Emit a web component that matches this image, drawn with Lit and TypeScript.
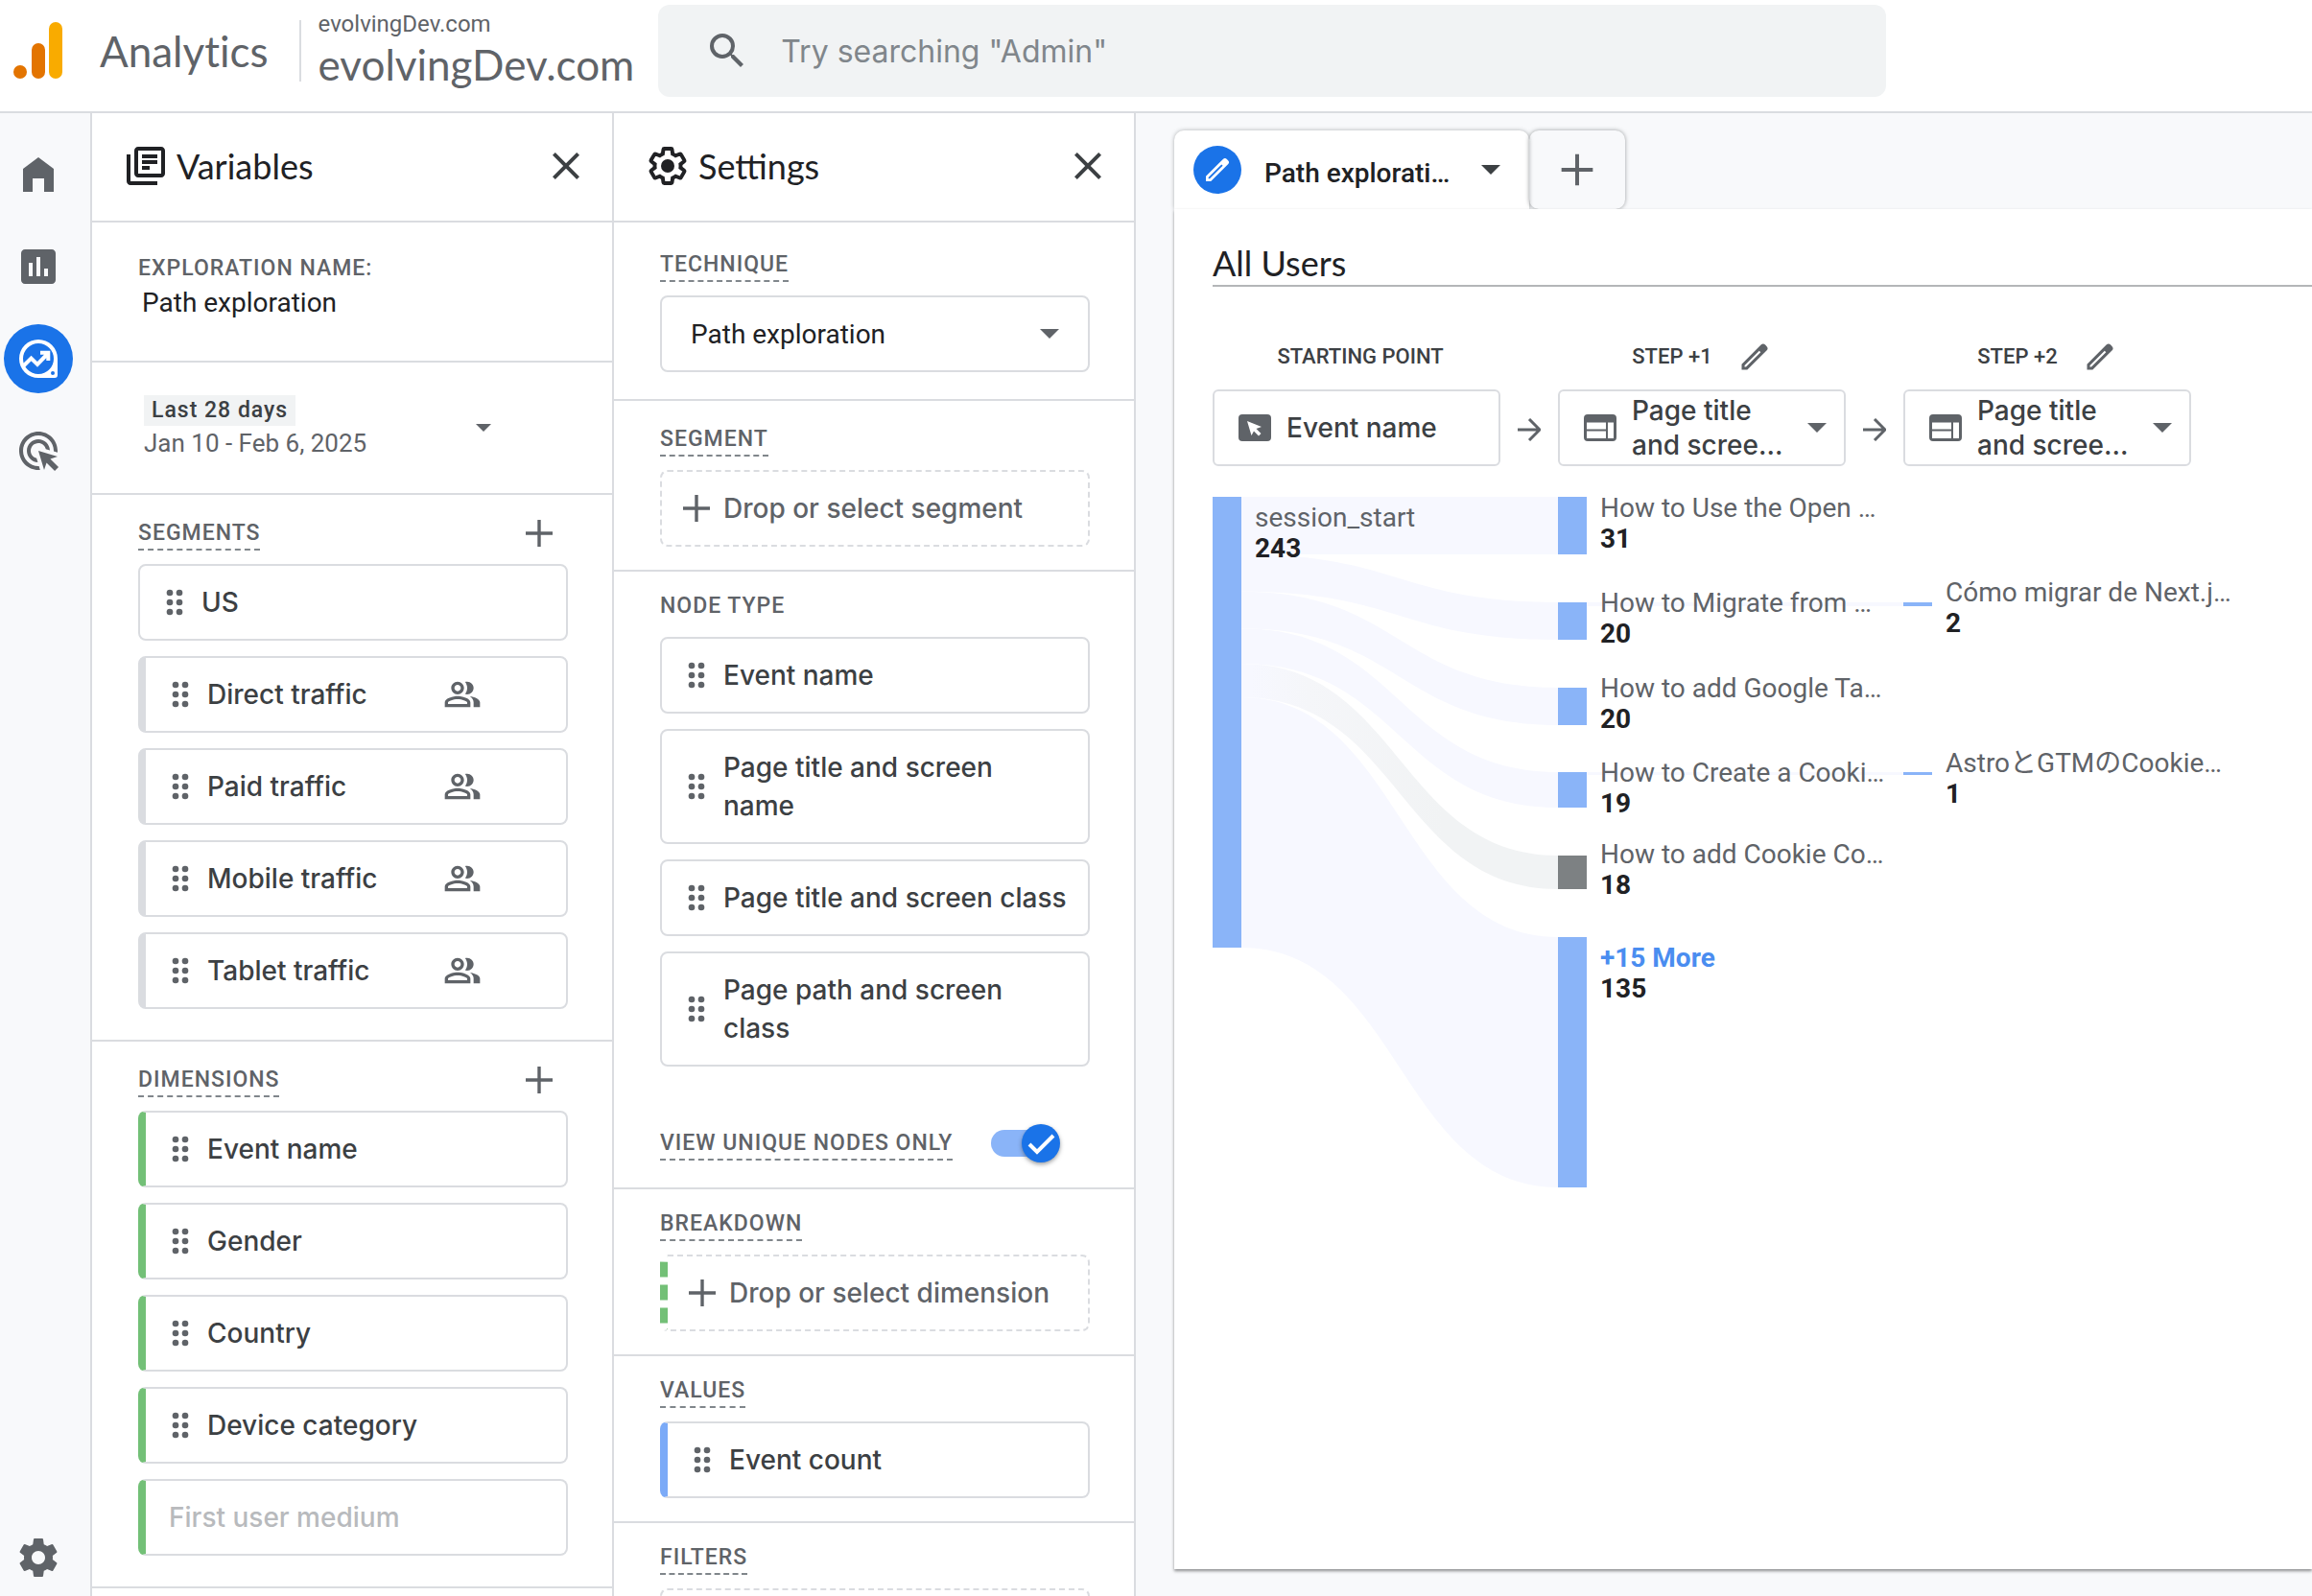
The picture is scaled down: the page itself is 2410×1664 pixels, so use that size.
import { LitElement, html, svg, css, nothing } from "lit";
import { customElement, property, state } from "lit/decorators.js";
import { classMap } from "lit/directives/class-map.js";
import { styleMap } from "lit/directives/style-map.js";

/* ---------- icons ---------- */

const GEAR =
  "M19.43 12.98c.04-.32.07-.64.07-.98s-.03-.66-.07-.98l2.11-1.65c.19-.15.24-.42.12-.64l-2-3.46c-.12-.22-.39-.3-.61-.22l-2.49 1c-.52-.4-1.08-.73-1.69-.98l-.38-2.65C14.46 2.18 14.25 2 14 2h-4c-.25 0-.46.18-.49.42l-.38 2.65c-.61.25-1.17.59-1.69.98l-2.49-1c-.23-.09-.49 0-.61.22l-2 3.46c-.13.22-.07.49.12.64l2.11 1.65c-.04.32-.07.65-.07.98s.03.66.07.98l-2.11 1.65c-.19.15-.24.42-.12.64l2 3.46c.12.22.39.3.61.22l2.49-1c.52.4 1.08.73 1.69.98l.38 2.65c.03.24.24.42.49.42h4c.25 0 .46-.18.49-.42l.38-2.65c.61-.25 1.17-.59 1.69-.98l2.49 1c.23.09.49 0 .61-.22l2-3.46c.12-.22.07-.49-.12-.64l-2.11-1.65z";

const PATHS: Record<string, string> = {
  home: "M4 21V9l8-6 8 6v12h-5v-7H9v7z",
  reports:
    "M19 3H5c-1.1 0-2 .9-2 2v14c0 1.1.9 2 2 2h14c1.1 0 2-.9 2-2V5c0-1.1-.9-2-2-2zM9 17H7v-7h2v7zm4 0h-2V7h2v10zm4 0h-2v-4h2v4z",
  ads: "M11.71 17.99C8.53 17.84 6 15.22 6 12c0-3.31 2.69-6 6-6 3.22 0 5.84 2.53 5.99 5.71l-2.1-.63C15.48 9.31 13.89 8 12 8c-2.21 0-4 1.79-4 4 0 1.89 1.31 3.48 3.08 3.89l.63 2.1zM22 12c0 .3-.01.6-.04.9l-1.97-.59c.01-.1.01-.21.01-.31 0-4.42-3.58-8-8-8s-8 3.58-8 8 3.58 8 8 8c.1 0 .21 0 .31-.01l.59 1.97c-.3.03-.6.04-.9.04C6.48 22 2 17.52 2 12S6.48 2 12 2s10 4.48 10 10zm-3.77 4.26L22 15l-10-3 3 10 1.26-3.77 4.27 4.27 1.98-1.98-4.28-4.26z",
  gear: GEAR + "M12 15.5c-1.93 0-3.5-1.57-3.5-3.5s1.57-3.5 3.5-3.5 3.5 1.57 3.5 3.5-1.57 3.5-3.5 3.5z",
  close:
    "M19 6.41 17.59 5 12 10.59 6.41 5 5 6.41 10.59 12 5 17.59 6.41 19 12 13.41 17.59 19 19 17.59 13.41 12z",
  add: "M12.85 5v6.15H19v1.7h-6.15V19h-1.7v-6.15H5v-1.7h6.15V5z",
  search:
    "M15.5 14h-.79l-.28-.27A6.47 6.47 0 0 0 16 9.5 6.5 6.5 0 1 0 9.5 16c1.61 0 3.09-.59 4.23-1.57l.27.28v.79l5 4.99L20.49 19l-4.99-5zm-6 0a4.5 4.5 0 1 1 0-9 4.5 4.5 0 0 1 0 9z",
  people:
    "M16.67 13.13C18.04 14.06 19 15.32 19 17v3h4v-3c0-2.18-3.57-3.47-6.33-3.87zM15 12c2.21 0 4-1.79 4-4s-1.79-4-4-4c-.47 0-.91.1-1.33.24C14.5 5.27 15 6.58 15 8s-.5 2.73-1.33 3.76c.42.14.86.24 1.33.24zM9 12c2.21 0 4-1.79 4-4s-1.79-4-4-4-4 1.79-4 4 1.79 4 4 4zm0-6c1.1 0 2 .9 2 2s-.9 2-2 2-2-.9-2-2 .9-2 2-2zM9 13c-2.67 0-8 1.34-8 4v3h16v-3c0-2.66-5.33-4-8-4zm6 5H3v-.99C3.2 16.29 6.3 15 9 15s5.8 1.29 6 2v1z",
  library:
    "M20 2H8c-1.1 0-2 .9-2 2v12c0 1.1.9 2 2 2h12c1.1 0 2-.9 2-2V4c0-1.1-.9-2-2-2zm0 14H8V4h12v12zM10 6h8v2h-8zM10 9h8v2h-8zM10 12h4v2h-4zM4 6H2v14c0 1.1.9 2 2 2h14v-2H4V6z",
  pencil:
    "M3 21v-3.9L16.4 3.7a2.1 2.1 0 0 1 3 0l.9.9a2.1 2.1 0 0 1 0 3L6.9 21zM5 19h1L16.2 8.8l-1-1L5 18z",
};

const icon = (name: string, size = 48) => html`
  <svg width=${size} height=${size} viewBox="0 0 24 24" fill="currentColor" fill-rule="evenodd" aria-hidden="true">
    ${svg`<path d=${PATHS[name]}></path>`}
  </svg>`;

const caret = (width = 20) => html`
  <svg width=${width} height=${width / 2} viewBox="0 0 20 10" fill="currentColor" aria-hidden="true">
    <path d="M0 0h20L10 10z"></path>
  </svg>`;

const grip = html`
  <svg width="40" height="40" viewBox="0 0 24 24" fill="currentColor" aria-hidden="true">
    ${[9, 15].map((x) => [6, 12, 18].map((y) => svg`<circle cx=${x} cy=${y} r="2"></circle>`))}
  </svg>`;

const gearOutline = html`
  <svg width="48" height="48" viewBox="0 0 24 24" aria-hidden="true">
    <path d=${GEAR} transform="translate(1.2 1.2) scale(.9)" fill="none" stroke="currentColor" stroke-width="2.2"></path>
    <circle cx="12" cy="12" r="3.5" fill="currentColor"></circle>
  </svg>`;

const exploreIcon = html`
  <svg width="40" height="40" viewBox="0 0 40 40" aria-hidden="true">
    <path fill="currentColor" fill-rule="evenodd"
      d="M20 0a20 20 0 0 1 20 20v17a3 3 0 0 1-3 3H20a20 20 0 0 1 0-40zM20 4a16 16 0 1 0 0 32 16 16 0 0 0 0-32zM35 33a2 2 0 1 0 0 4 2 2 0 0 0 0-4z"></path>
    <path fill="none" stroke="currentColor" stroke-width="4" d="M4 28l8.500-8.500 6.500 6.500 10.500-11M22 13.700h8.300V22"></path>
  </svg>`;

const eventIcon = html`
  <svg width="34" height="28" viewBox="0 0 34 28" aria-hidden="true">
    <rect width="34" height="28" rx="4" fill="currentColor"></rect>
    <path d="M9 7l15 6-5.500 2 5 5-2.500 2.500-5-5L13.500 22z" fill="#fff"></path>
  </svg>`;

const pageIcon = html`
  <svg width="34" height="28" viewBox="0 0 34 28" aria-hidden="true">
    <path fill="currentColor" fill-rule="evenodd"
      d="M4 0h26a4 4 0 0 1 4 4v20a4 4 0 0 1-4 4H4a4 4 0 0 1-4-4V4a4 4 0 0 1 4-4zM3 8.500v7h20v-7zM3 17.500v7.500h20v-7.500zM25 8.500V25h6V8.500z"></path>
  </svg>`;

const arrowRight = html`
  <svg width="24" height="24" viewBox="0 0 24 24" fill="none" stroke="currentColor" stroke-width="3" aria-hidden="true">
    <path d="M0 12h22M12 1l11 11-11 11"></path>
  </svg>`;

/* ---------- shared styles ---------- */

const base = css`
  * {
    box-sizing: border-box;
  }
  svg {
    display: block;
    flex: none;
  }
  button,
  input,
  select {
    margin: 0;
    padding: 0;
    border: 0;
    background: none;
    color: inherit;
    font: inherit;
    text-align: left;
    outline-offset: 2px;
  }
  button,
  select {
    cursor: pointer;
  }
  .iconbtn {
    display: grid;
    place-items: center;
    flex: none;
  }
`;

/* ---------- chip ---------- */

type Accent = "none" | "grey" | "green" | "blue";

@customElement("field-chip")
export class FieldChip extends LitElement {
  @property() label = "";
  @property() accent: Accent = "none";
  @property({ type: Boolean }) people = false;
  @property({ type: Boolean }) muted = false;
  @property({ type: Boolean }) drop = false;

  static styles = [
    base,
    css`
      :host {
        display: block;
      }
      .chip {
        display: flex;
        align-items: center;
        gap: 4px;
        width: 100%;
        min-height: 80px;
        padding: 18px 20px 18px 12px;
        border: 2px solid #dadce0;
        border-radius: 8px;
        background: #fff;
        color: #3c4043;
        font: 500 28px/40px Inter, "Liberation Sans", sans-serif;
      }
      .drop {
        border-style: dashed;
        color: #5f6368;
      }
      .grey {
        border-left: 8px solid #dadce0;
      }
      .green {
        border-left: 8px solid #73c077;
      }
      .blue {
        border-left: 8px solid #7baaf7;
      }
      .drop.green {
        border-left-style: dashed;
      }
      .muted {
        padding-left: 24px;
        color: #b8babd;
      }
      .slot {
        display: grid;
        place-items: center;
        flex: none;
        width: 48px;
        height: 48px;
        margin: -4px 0;
        color: #5f6368;
      }
      .people {
        margin: 0 68px 0 auto;
        color: #5f6368;
      }
    `,
  ];

  render() {
    const cls = classMap({
      chip: true,
      drop: this.drop,
      muted: this.muted,
      [this.accent]: this.accent !== "none",
    });
    return html`
      <button class=${cls} type="button">
        ${this.muted ? nothing : html`<span class="slot">${this.drop ? icon("add") : grip}</span>`}
        <span>${this.label}</span>
        ${this.people ? html`<span class="people">${icon("people", 40)}</span>` : nothing}
      </button>`;
  }
}

/* ---------- path graph ---------- */

interface PathNode {
  name: string;
  count: number;
  x: number;
  y: number;
  h: number;
  labelY: number;
  kind?: "selected" | "more";
}

const NODE_W = 30;
const SOURCE: PathNode = { name: "session_start", count: 243, x: 0, y: 0, h: 470, labelY: 6 };
const STEP_1: PathNode[] = [
  { name: "How to Use the Open …", count: 31, x: 360, y: 0, h: 60, labelY: -4 },
  { name: "How to Migrate from …", count: 20, x: 360, y: 110, h: 39, labelY: 95 },
  { name: "How to add Google Ta…", count: 20, x: 360, y: 199, h: 39, labelY: 184 },
  { name: "How to Create a Cooki…", count: 19, x: 360, y: 287, h: 37, labelY: 272 },
  { name: "How to add Cookie Co…", count: 18, x: 360, y: 374, h: 35, labelY: 357, kind: "selected" },
  { name: "+15 More", count: 135, x: 360, y: 459, h: 261, labelY: 465, kind: "more" },
];
const STEP_2: PathNode[] = [
  { name: "Cómo migrar de Next.j…", count: 2, x: 720, y: 110, h: 4, labelY: 84 },
  { name: "AstroとGTMのCookie…", count: 1, x: 720, y: 287, h: 3, labelY: 262 },
];

@customElement("path-graph")
export class PathGraph extends LitElement {
  static styles = [
    base,
    css`
      :host {
        display: block;
      }
      .canvas {
        position: relative;
        height: 720px;
      }
      .shapes {
        overflow: visible;
      }
      .link {
        fill: #f7f8ff;
      }
      .link.selected {
        fill: url(#fade);
      }
      .node {
        fill: #8ab4f8;
      }
      .node.selected {
        fill: #7d8183;
      }
      .label {
        position: absolute;
        display: flex;
        flex-direction: column;
        color: #5f6368;
        font: 400 28px/32px Roboto, "Noto Sans CJK JP", sans-serif;
        white-space: nowrap;
      }
      .count {
        color: #202124;
        font-weight: 700;
      }
      .more {
        color: #4a8df0;
        font-weight: 700;
      }
    `,
  ];

  private ribbon(from: PathNode, top: number, height: number, to: PathNode) {
    const x0 = from.x + NODE_W;
    const x1 = to.x;
    const mid = (x0 + x1) / 2;
    const d =
      `M${x0} ${top}C${mid} ${top} ${mid} ${to.y} ${x1} ${to.y}V${to.y + to.h}` +
      `C${mid} ${to.y + to.h} ${mid} ${top + height} ${x0} ${top + height}z`;
    return svg`<path class=${classMap({ link: true, selected: to.kind === "selected" })} d=${d}></path>`;
  }

  private links() {
    const unit = SOURCE.h / SOURCE.count;
    let top = 0;
    return STEP_1.map((node) => {
      const height = node.count * unit;
      const shape = this.ribbon(SOURCE, top, height, node);
      top += height;
      return shape;
    });
  }

  render() {
    const nodes = [SOURCE, ...STEP_1, ...STEP_2];
    return html`
      <div class="canvas">
        <svg class="shapes" width="750" height="720" viewBox="0 0 750 720" aria-hidden="true">
          <defs>
            <linearGradient id="fade" gradientUnits="userSpaceOnUse" x1="40" x2="240" y1="0" y2="0">
              <stop offset="0" stop-color="#f7f8ff"></stop>
              <stop offset="0.3" stop-color="#f5f6f9"></stop>
              <stop offset="1" stop-color="#f1f3f4"></stop>
            </linearGradient>
          </defs>
          ${this.links()}
          ${STEP_2.map(
            (n) => svg`<rect class="link" x=${360 + NODE_W} y=${n.y} width=${330} height=${n.h}></rect>`
          )}
          ${nodes.map(
            (n) => svg`<rect class=${classMap({ node: true, selected: n.kind === "selected" })}
              x=${n.x} y=${n.y} width=${NODE_W} height=${n.h}></rect>`
          )}
        </svg>
        ${nodes.map(
          (n) => html`
            <div class="label" style=${styleMap({ left: `${n.x + NODE_W + 14}px`, top: `${n.labelY}px` })}>
              ${n.kind === "more"
                ? html`<button class="more" type="button">${n.name}</button>`
                : html`<span>${n.name}</span>`}
              <span class="count">${n.count}</span>
            </div>`
        )}
      </div>`;
  }
}

/* ---------- page ---------- */

@customElement("app-root")
export class AppRoot extends LitElement {
  @state() private unique = true;

  static styles = [
    base,
    css`
      :host {
        display: flex;
        flex-direction: column;
        height: 100vh;
        overflow: hidden;
        background: #fff;
        color: #202124;
        font-family: Roboto, "Liberation Sans", sans-serif;
      }

      .top {
        display: flex;
        align-items: center;
        flex: none;
        padding: 5px 16px 15px 14px;
        border-bottom: 2px solid #dadce0;
        color: #5f6368;
      }
      .product {
        margin: 0 32px 0 38px;
        font: 400 44px/52px Lato, sans-serif;
        font-variant-ligatures: none;
      }
      .account {
        display: flex;
        flex-direction: column;
        padding: 0 25px 4px 18px;
      }
      .account-small {
        font-size: 24px;
        line-height: 32px;
      }
      .account-big {
        font: 400 44px/52px Lato, sans-serif;
      }
      .rule {
        width: 2px;
        height: 64px;
        background: #dadce0;
      }
      .search {
        display: flex;
        align-items: center;
        gap: 32px;
        flex: 0 1 1280px;
        height: 96px;
        padding: 0 48px;
        border-radius: 12px;
        background: #f1f3f4;
      }
      .search input {
        flex: 1;
        min-width: 0;
        height: 64px;
        font: 400 32px/40px Inter, sans-serif;
      }
      .search input::placeholder {
        color: #80868b;
        opacity: 1;
      }

      .body {
        display: grid;
        grid-template-columns: 96px 544px 544px minmax(0, 1fr);
        flex: 1;
        min-height: 0;
      }

      .rail {
        display: flex;
        flex-direction: column;
        gap: 24px;
        padding: 28px 4px 4px;
        border-right: 2px solid #dadce0;
        background: #f8f9fb;
        color: #5f6368;
      }
      .rail a {
        display: grid;
        place-items: center;
        width: 72px;
        height: 72px;
        border-radius: 50%;
        color: inherit;
      }
      .rail a.active {
        background: #1a73e8;
        color: #fff;
      }
      .rail a.admin {
        margin-top: auto;
      }

      .panel {
        min-width: 0;
        overflow-y: auto;
        scrollbar-width: none;
        border-right: 2px solid #dadce0;
      }
      .panel-head {
        display: flex;
        align-items: center;
        gap: 8px;
        height: 114px;
        padding: 0 24px 2px 32px;
        border-bottom: 2px solid #dadce0;
      }
      .panel-head h2 {
        flex: 1;
        margin: 0;
        font: 400 36px/44px Lato, sans-serif;
      }
      .panel-head .iconbtn {
        color: #3c4043;
      }

      .section {
        display: flex;
        flex-direction: column;
        align-items: stretch;
        gap: 16px;
        padding: 20px 46px 24px 48px;
        border-bottom: 2px solid #dadce0;
      }
      .section.roomy {
        padding-top: 28px;
        padding-bottom: 28px;
      }
      .section.segment {
        padding-top: 24px;
      }
      .section.list {
        padding-top: 16px;
        padding-bottom: 32px;
      }
      .section.name {
        gap: 0;
        padding-top: 32px;
        padding-bottom: 40px;
      }
      .section.date {
        padding-top: 34px;
        padding-bottom: 34px;
      }
      .section.nodes {
        padding-bottom: 26px;
      }

      .label {
        align-self: flex-start;
        margin-bottom: -2px;
        border-bottom: 2px dashed #80868b;
        color: #5f6368;
        font-weight: 500;
        font-size: 23px;
        line-height: 32px;
        letter-spacing: 1px;
        text-transform: uppercase;
      }
      .label.plain {
        border-bottom-color: transparent;
      }
      .list-head {
        display: flex;
        align-items: center;
        justify-content: space-between;
        height: 48px;
        margin: 0 6px -8px 0;
      }
      .list-head .label,
      .toggle-row .label {
        align-self: center;
        margin: 2px 0 0;
      }
      .list-head .iconbtn {
        color: #5f6368;
      }

      .name-input {
        width: 100%;
        height: 40px;
        padding-left: 4px;
        font-size: 28px;
        line-height: 40px;
      }

      .date-btn {
        display: flex;
        align-items: center;
        justify-content: space-between;
        padding: 0 80px 0 6px;
        color: #5f6368;
      }
      .date-text {
        display: flex;
        flex-direction: column;
        align-items: flex-start;
      }
      .date-chip {
        padding: 0 8px;
        background: #f1f3f4;
        color: #3c4043;
        font-weight: 500;
        font-size: 23px;
        line-height: 32px;
        letter-spacing: 1px;
      }
      .date-range {
        font-size: 26px;
        line-height: 36px;
      }

      .select {
        display: grid;
        align-items: center;
        color: #5f6368;
      }
      .select select,
      .select svg {
        grid-area: 1 / 1;
      }
      .select svg {
        justify-self: end;
        margin-right: 32px;
        pointer-events: none;
      }
      .select select {
        width: 100%;
        height: 80px;
        padding: 0 64px 0 30px;
        border: 2px solid #dadce0;
        border-radius: 8px;
        appearance: none;
        background: #fff;
        color: #202124;
        font-size: 28px;
      }

      .toggle-row {
        display: flex;
        align-items: center;
        gap: 40px;
        height: 40px;
        margin-top: 44px;
      }
      .toggle {
        display: grid;
        align-items: center;
        width: 72px;
        height: 40px;
      }
      .toggle input,
      .toggle svg {
        grid-area: 1 / 1;
      }
      .toggle input {
        width: 68px;
        height: 28px;
        margin-left: 0;
        border-radius: 14px;
        appearance: none;
        background: #bdc1c6;
        cursor: pointer;
      }
      .toggle input:checked {
        background: #8ab4f8;
      }
      .toggle svg {
        justify-self: start;
        border-radius: 50%;
        box-shadow: 0 2px 4px rgba(60, 64, 67, 0.5);
        background: #fff;
        color: #fff;
        pointer-events: none;
      }
      .toggle input:checked + svg {
        justify-self: end;
        background: #1a73e8;
      }

      .stage {
        display: flex;
        flex-direction: column;
        min-width: 0;
        padding: 18px 0 28px 40px;
        overflow: hidden;
        background: #f8f9fb;
      }
      .tabs {
        display: flex;
        height: 82px;
      }
      .tab {
        display: flex;
        align-items: center;
        flex: none;
        width: 370px;
        padding: 0 30px 0 20px;
        border-radius: 10px 10px 0 0;
        box-shadow: 0 0 4px rgba(60, 64, 67, 0.4);
        background: #fff;
        font: 500 28px/36px Roboto, sans-serif;
      }
      .tab-badge {
        display: grid;
        place-items: center;
        width: 50px;
        height: 50px;
        border-radius: 50%;
        background: #1a73e8;
        color: #fff;
      }
      .tab-title {
        flex: 1;
        padding: 8px 0 0 24px;
        white-space: nowrap;
      }
      .tab-caret {
        color: #3c4043;
      }
      .tab-add {
        display: grid;
        place-items: center;
        width: 100px;
        border-radius: 10px;
        box-shadow: 0 0 4px rgba(60, 64, 67, 0.5);
        color: #5f6368;
      }
      .sheet {
        z-index: 1;
        flex: 1;
        min-height: 0;
        padding: 34px 0 0 40px;
        box-shadow: 0 2px 3px rgba(32, 33, 36, 0.5);
        background: #fff;
      }
      .sheet h1 {
        margin: 0;
        padding-bottom: 1px;
        border-bottom: 2px solid #b4b6b8;
        font: 400 36px/44px Lato, sans-serif;
      }
      .steps {
        display: grid;
        grid-template-columns: repeat(3, 300px);
        gap: 10px 60px;
        padding: 49px 0 32px;
      }
      .step-head {
        display: flex;
        align-items: center;
        justify-content: center;
        gap: 26px;
        height: 48px;
        color: #3c4043;
        font-weight: 500;
        font-size: 22px;
        line-height: 28px;
      }
      .step-head.start {
        padding-left: 8px;
      }
      .step-head .iconbtn {
        color: #5f6368;
      }
      .step {
        display: grid;
        grid-template-columns: 34px 1fr 20px;
        align-items: center;
        gap: 16px;
        width: 100%;
        height: 80px;
        padding: 0 18px 0 25px;
        border: 2px solid #dadce0;
        border-radius: 6px;
        color: #5f6368;
      }
      .step-text {
        color: #3c4043;
        font: 500 28px/36px Inter, sans-serif;
        white-space: nowrap;
      }
      .step-cell {
        position: relative;
      }
      .step-arrow {
        position: absolute;
        top: 30px;
        left: -42px;
        color: #5f6368;
      }
    `,
  ];

  private list(title: string, addLabel: string, chips: unknown) {
    return html`
      <section class="section list">
        <div class="list-head">
          <span class="label">${title}</span>
          <button class="iconbtn" type="button" aria-label=${addLabel}>${icon("add")}</button>
        </div>
        ${chips}
      </section>`;
  }

  private variables() {
    return html`
      <aside class="panel">
        <header class="panel-head">
          ${icon("library")}
          <h2>Variables</h2>
          <button class="iconbtn" type="button" aria-label="Close variables">${icon("close")}</button>
        </header>
        <section class="section name">
          <label class="label plain" for="exploration">Exploration name:</label>
          <input class="name-input" id="exploration" type="text" .value=${"Path exploration"} />
        </section>
        <section class="section date">
          <button class="date-btn" type="button">
            <span class="date-text">
              <span class="date-chip">Last 28 days</span>
              <span class="date-range">Jan 10 - Feb 6, 2025</span>
            </span>
            ${caret(16)}
          </button>
        </section>
        ${this.list(
          "Segments",
          "Add segment",
          html`
            <field-chip label="US"></field-chip>
            ${["Direct", "Paid", "Mobile", "Tablet"].map(
              (s) => html`<field-chip accent="grey" people label=${`${s} traffic`}></field-chip>`
            )}`
        )}
        ${this.list(
          "Dimensions",
          "Add dimension",
          html`
            ${["Event name", "Gender", "Country", "Device category"].map(
              (s) => html`<field-chip accent="green" label=${s}></field-chip>`
            )}
            <field-chip accent="green" muted label="First user medium"></field-chip>`
        )}
      </aside>`;
  }

  private settings() {
    return html`
      <aside class="panel">
        <header class="panel-head">
          ${gearOutline}
          <h2>Settings</h2>
          <button class="iconbtn" type="button" aria-label="Close settings">${icon("close")}</button>
        </header>
        <section class="section roomy">
          <label class="label" for="technique">Technique</label>
          <div class="select">
            <select id="technique">
              <option>Path exploration</option>
            </select>
            ${caret()}
          </div>
        </section>
        <section class="section segment">
          <span class="label">Segment</span>
          <field-chip drop label="Drop or select segment"></field-chip>
        </section>
        <section class="section nodes">
          <span class="label plain">Node type</span>
          ${[
            "Event name",
            "Page title and screen name",
            "Page title and screen class",
            "Page path and screen class",
          ].map((s) => html`<field-chip label=${s}></field-chip>`)}
          <div class="toggle-row">
            <label class="label" for="unique">View unique nodes only</label>
            <span class="toggle">
              <input
                id="unique"
                type="checkbox"
                .checked=${this.unique}
                @change=${(e: Event) => (this.unique = (e.target as HTMLInputElement).checked)}
              />
              <svg width="40" height="40" viewBox="0 0 40 40" fill="none" stroke="currentColor" stroke-width="4">
                <path d="M8 21l8 8 17-17"></path>
              </svg>
            </span>
          </div>
        </section>
        <section class="section">
          <span class="label">Breakdown</span>
          <field-chip drop accent="green" label="Drop or select dimension"></field-chip>
        </section>
        <section class="section">
          <span class="label">Values</span>
          <field-chip accent="blue" label="Event count"></field-chip>
        </section>
        <section class="section">
          <span class="label">Filters</span>
          <field-chip drop></field-chip>
        </section>
      </aside>`;
  }

  private stage() {
    return html`
      <main class="stage">
        <div class="tabs">
          <button class="tab" type="button">
            <span class="tab-badge">${icon("pencil", 32)}</span>
            <span class="tab-title">Path explorati…</span>
            <span class="tab-caret">${caret()}</span>
          </button>
          <button class="tab-add" type="button" aria-label="Add tab">${icon("add", 56)}</button>
        </div>
        <div class="sheet">
          <h1>All Users</h1>
          <div class="steps">
            <div class="step-head start">STARTING POINT</div>
            ${[1, 2].map(
              (n) => html`
                <div class="step-head">
                  STEP +${n}
                  <button class="iconbtn" type="button" aria-label="Edit step +${n}">${icon("pencil", 36)}</button>
                </div>`
            )}
            <div class="step-cell">
              <button class="step" type="button">${eventIcon}<span class="step-text">Event name</span></button>
            </div>
            ${[1, 2].map(
              () => html`
                <div class="step-cell">
                  <span class="step-arrow">${arrowRight}</span>
                  <button class="step" type="button">
                    ${pageIcon}<span class="step-text">Page title<br />and scree…</span>${caret()}
                  </button>
                </div>`
            )}
          </div>
          <path-graph></path-graph>
        </div>
      </main>`;
  }

  render() {
    return html`
      <header class="top">
        <svg width="52" height="60" viewBox="0 0 52 60" aria-hidden="true">
          <rect x="37" y="0" width="14" height="59" rx="7" fill="#f9ab00"></rect>
          <rect x="19" y="22" width="14" height="37" rx="7" fill="#e37400"></rect>
          <circle cx="7" cy="52" r="7" fill="#e37400"></circle>
        </svg>
        <span class="product">Analytics</span>
        <span class="rule"></span>
        <span class="account">
          <span class="account-small">evolvingDev.com</span>
          <span class="account-big">evolvingDev.com</span>
        </span>
        <label class="search">
          ${icon("search")}
          <input type="search" aria-label="Search" placeholder=${'Try searching "Admin"'} />
        </label>
      </header>
      <div class="body">
        <nav class="rail">
          <a href="#home" aria-label="Home">${icon("home")}</a>
          <a href="#reports" aria-label="Reports">${icon("reports")}</a>
          <a class="active" href="#explore" aria-label="Explore">${exploreIcon}</a>
          <a href="#advertising" aria-label="Advertising">${icon("ads")}</a>
          <a class="admin" href="#admin" aria-label="Admin">${icon("gear")}</a>
        </nav>
        ${this.variables()} ${this.settings()} ${this.stage()}
      </div>`;
  }
}
